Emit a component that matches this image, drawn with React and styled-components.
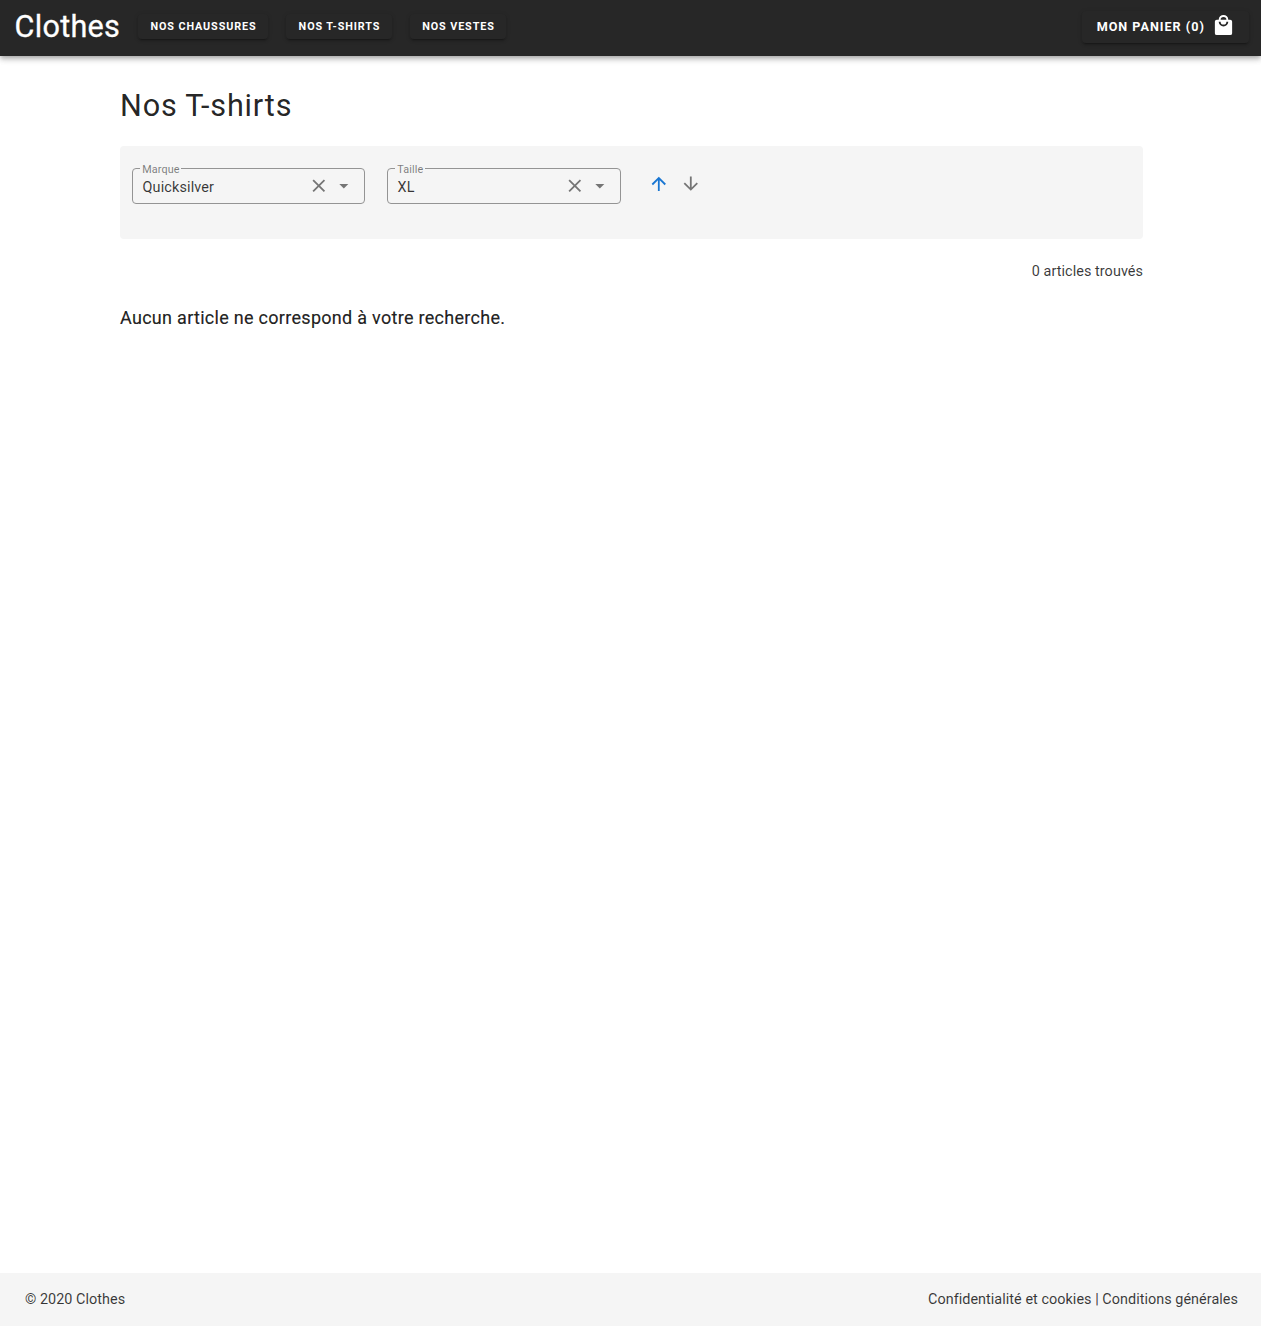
import React from "react";
import styled, { createGlobalStyle } from "styled-components";

const GlobalStyle = createGlobalStyle`
  *, *::before, *::after { box-sizing: border-box; }
  body { margin: 0; background: #fff; color: rgba(0,0,0,.87); font-family: Roboto, sans-serif; font-size: 14.4px; line-height: 1.5; }
  button { font: inherit; }
`;

const Page = styled.div`
  min-height: 100vh;
  display: flex;
  flex-direction: column;
`;

const Header = styled.header`
  height: 56px;
  padding: 0 12px 3px 14px;
  display: flex;
  align-items: center;
  background: #272727;
  color: #fff;
  box-shadow: 0 2px 4px -1px rgba(0,0,0,.2), 0 4px 5px 0 rgba(0,0,0,.14), 0 1px 9px 0 rgba(0,0,0,.12);
`;

const Brand = styled.div`
  width: 124px;
  padding-left: 0.5px;
  font-size: 30.6px;
  line-height: 36px;
  letter-spacing: .28px;
  -webkit-text-stroke: .3px currentColor;
`;

const Nav = styled.nav`
  display: flex;
  gap: 18px;
  flex: 1;
`;

const Button = styled.button`
  display: inline-flex;
  align-items: center;
  justify-content: center;
  width: ${(p) => p.$width}px;
  height: ${(p) => (p.$large ? 32 : 25)}px;
  padding: ${(p) => (p.$large ? "1px 0 0" : "2px 0 0 1px")};
  border: 0;
  border-radius: 4px;
  background: #272727;
  color: #fff;
  font-size: ${(p) => (p.$large ? 12.6 : 10.8)}px;
  font-weight: 700;
  letter-spacing: ${(p) => (p.$large ? 1 : 0.9)}px;
  white-space: nowrap;
  box-shadow: 0 3px 1px -2px rgba(0,0,0,.2), 0 2px 2px 0 rgba(0,0,0,.14), 0 1px 5px 0 rgba(0,0,0,.12);
  svg { margin: -4px -1px 0 7.5px; }
`;

const Main = styled.main`
  width: 1023px;
  margin: 0 118px 0 120px;
  padding-top: 32px;
  flex: 1;
`;

const Title = styled.h1`
  margin: 0 0 22px;
  font-size: 30.6px;
  line-height: 36px;
  font-weight: 400;
  letter-spacing: .83px;
`;

const Filters = styled.section`
  height: 93px;
  padding: 16px 12px;
  display: flex;
  border-radius: 4px;
  background: #f5f5f5;
`;

const Field = styled.fieldset`
  width: ${(p) => p.$width}px;
  height: 42px;
  margin: 0 22px 0 0;
  padding: 0 9px 0 9.5px;
  border: 1px solid #949494;
  border-radius: 4px;
  min-width: 0;
`;

const Legend = styled.legend`
  margin-left: -2.5px;
  padding: 0 1.5px 0 2.3px;
  height: 13px;
  font-size: 10.8px;
  line-height: 15px;
  letter-spacing: .1px;
  color: rgba(0,0,0,.5);
`;

const FieldRow = styled.div`
  height: 23px;
  display: flex;
  align-items: center;
  color: #757575;
  svg { margin: -2px 0 0 3.5px; }
`;

const Value = styled.span`
  flex: 1;
  padding-top: 2px;
  color: rgba(0,0,0,.78);
  font-size: 14.4px;
  line-height: 20px;
  letter-spacing: .15px;
`;

const Arrows = styled.div`
  display: flex;
  gap: 10.5px;
  padding: 11px 0 0 5px;
`;

const Count = styled.div`
  margin-top: 22px;
  text-align: right;
  line-height: 21px;
  letter-spacing: .06px;
  color: rgba(0,0,0,.78);
`;

const Empty = styled.p`
  margin: 22px 0 0;
  font-size: 18px;
  line-height: 28px;
  letter-spacing: .29px;
  -webkit-text-stroke: .2px currentColor;
`;

const Footer = styled.footer`
  height: 53px;
  padding: 0 23px 0 25px;
  display: flex;
  align-items: center;
  justify-content: space-between;
  background: #f5f5f5;
  letter-spacing: .045px;
  color: rgba(0,0,0,.78);
`;

const paths = {
  bag: "M12,13A5,5 0 0,1 7,8H9A3,3 0 0,0 12,11A3,3 0 0,0 15,8H17A5,5 0 0,1 12,13M12,3A3,3 0 0,1 15,6H9A3,3 0 0,1 12,3M19,6H17A5,5 0 0,0 12,1A5,5 0 0,0 7,6H5C3.89,6 3,6.9 3,8V20A2,2 0 0,0 5,22H19A2,2 0 0,0 21,20V8C21,6.89 20.1,6 19,6Z",
  close: "M19,6.41L17.59,5L12,10.59L6.41,5L5,6.41L10.59,12L5,17.59L6.41,19L12,13.41L17.59,19L19,17.59L13.41,12L19,6.41Z",
  menu: "M7,10L12,15L17,10H7Z",
  up: "M13,20H11V8L5.5,13.5L4.08,12.08L12,4.16L19.92,12.08L18.5,13.5L13,8V20Z",
  down: "M11,4H13V16L18.5,10.5L19.92,11.92L12,19.84L4.08,11.92L5.5,10.5L11,16V4Z",
};

const Icon = ({ name, size = 21.6, color = "currentColor" }) => (
  <svg width={size} height={size} viewBox="0 0 24 24" fill={color} aria-hidden="true">
    <path d={paths[name]} />
  </svg>
);

const Select = ({ label, value, width }) => (
  <Field $width={width}>
    <Legend>{label}</Legend>
    <FieldRow>
      <Value>{value}</Value>
      <Icon name="close" />
      <Icon name="menu" />
    </FieldRow>
  </Field>
);

export default function App() {
  return (
    <Page>
      <GlobalStyle />
      <Header>
        <Brand>Clothes</Brand>
        <Nav>
          <Button $width={130}>NOS CHAUSSURES</Button>
          <Button $width={106}>NOS T-SHIRTS</Button>
          <Button $width={96}>NOS VESTES</Button>
        </Nav>
        <Button $large $width={167}>
          MON PANIER (0)
          <Icon name="bag" size={23} />
        </Button>
      </Header>
      <Main>
        <Title>Nos T-shirts</Title>
        <Filters>
          <Select label="Marque" value="Quicksilver" width={233} />
          <Select label="Taille" value="XL" width={234} />
          <Arrows>
            <Icon name="up" color="#1976d2" />
            <Icon name="down" color="#757575" />
          </Arrows>
        </Filters>
        <Count>0 articles trouvés</Count>
        <Empty>Aucun article ne correspond à votre recherche.</Empty>
      </Main>
      <Footer>
        <span>© 2020 Clothes</span>
        <span>Confidentialité et cookies | Conditions générales</span>
      </Footer>
    </Page>
  );
}
